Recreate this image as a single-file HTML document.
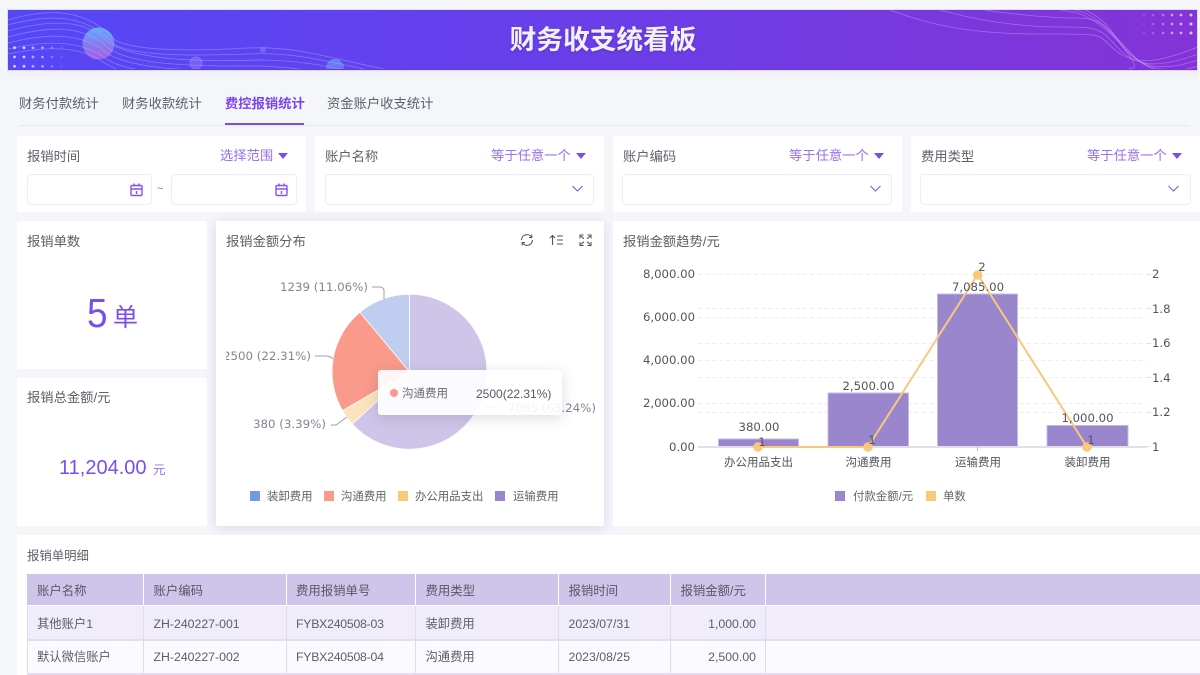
<!DOCTYPE html>
<html lang="zh-CN"><head><meta charset="utf-8"><title>财务收支统看板</title>
<style>
*{box-sizing:border-box}
html,body{margin:0;padding:0;width:1200px;height:675px;overflow:hidden;background:#f4f6fa}
#w{position:absolute;left:0;top:0;width:1200px;height:675px;overflow:hidden;filter:blur(.35px);font-family:"Liberation Sans","Noto Sans CJK SC",sans-serif;color:#50565e}
.a{position:absolute;white-space:nowrap}
.c{position:absolute;background:#fff}
.t{font-size:13.3px;line-height:18px;color:#5c626a}
.p{font-size:13.3px;line-height:18px;color:#9a70f0}
.i{position:absolute;background:#fff;border:1px solid #eceef2;border-radius:4px;height:31px}
.tri{position:absolute;width:0;height:0;border-left:5.5px solid transparent;border-right:5.5px solid transparent;border-top:6.5px solid #7a4df0}
.h{position:absolute;top:574px;height:31px;background:#cfc4ea;font-size:12.4px;line-height:34px;padding-left:10px;color:#555a64;white-space:nowrap}
.d{position:absolute;height:33px;font-size:12.3px;line-height:34px;padding-left:10px;color:#5a5f68;white-space:nowrap}
.r{text-align:right;padding:0 9px 0 0}
</style></head><body><div id="w">

<!-- banner -->
<div class="a" style="left:7px;top:9px;width:1191px;height:62px;background:linear-gradient(90deg,#5547f6 0%,#6a3ee8 50%,#8433d6 100%);border:1px solid #e0dcf3;overflow:hidden">
<svg width="1191" height="62" style="position:absolute;left:0;top:0" fill="none">
<defs><linearGradient id="o" x1="0" y1="0" x2="0" y2="1"><stop offset="0" stop-color="#5aaef5"/><stop offset=".55" stop-color="#8a78ee"/><stop offset="1" stop-color="#a45fe6"/></linearGradient>
<linearGradient id="o2" x1="0" y1="0" x2="0" y2="1"><stop offset="0" stop-color="#5aa0f0"/><stop offset="1" stop-color="#8a5cf0"/></linearGradient></defs>
<circle cx="90.500" cy="33.500" r="16" fill="url(#o)"/>
<circle cx="188" cy="53" r="6" fill="#a58cff" fill-opacity=".35" stroke="#b8a8ff" stroke-opacity=".35"/>
<circle cx="255" cy="40" r="3" fill="#a58cff" fill-opacity=".4"/>
<circle cx="327" cy="58" r="9" fill="url(#o2)" fill-opacity=".8"/>
<ellipse cx="327" cy="69" rx="20" ry="9" fill="#8b5cf0" fill-opacity=".8"/>
<g stroke="#a9b0ff" stroke-opacity=".5" stroke-width=".8">
<path d="M0 10C40 -2 78 -2 107 30C125 40 170 42 240 38C290 36 320 48 390 62"/>
<path d="M0 15C40 4 78 3 107 35C130 46 180 46 240 44C290 42 320 52 370 62"/>
<path d="M0 21C40 10 78 8 100 32C125 50 190 52 250 50C290 50 320 56 345 62"/>
<path d="M0 27C40 16 75 14 100 38C125 56 190 56 250 56C280 57 300 60 310 62"/>
<path d="M0 33C40 23 75 22 100 44C125 58 170 60 230 62"/>
<path d="M0 39C40 30 75 30 100 50C110 56 125 60 150 62"/>
<path d="M0 44C40 36 72 36 95 52C105 58 110 60 118 62"/>
</g>
<g fill="#fff">
<g fill-opacity=".75"><circle cx="6.500" cy="37.700" r="1.400"/><circle cx="6.500" cy="47" r="1.400"/><circle cx="6.500" cy="56.300" r="1.400"/><circle cx="16" cy="37.700" r="1.400"/><circle cx="16" cy="47" r="1.400"/><circle cx="16" cy="56.300" r="1.400"/></g>
<g fill-opacity=".55"><circle cx="25" cy="37.700" r="1.400"/><circle cx="25" cy="47" r="1.400"/><circle cx="25" cy="56.300" r="1.400"/><circle cx="34.500" cy="37.700" r="1.300"/><circle cx="34.500" cy="47" r="1.300"/><circle cx="34.500" cy="56.300" r="1.300"/></g>
<g fill-opacity=".28"><circle cx="44" cy="37.700" r="1.300"/><circle cx="44" cy="47" r="1.300"/><circle cx="44" cy="56.300" r="1.300"/></g>
<g fill-opacity=".12"><circle cx="53.500" cy="37.700" r="1.200"/><circle cx="53.500" cy="47" r="1.200"/><circle cx="53.500" cy="56.300" r="1.200"/></g>
<g fill-opacity=".12"><circle cx="1136" cy="5" r="1.300"/><circle cx="1136" cy="14" r="1.300"/><circle cx="1136" cy="23" r="1.300"/></g>
<g fill-opacity=".22"><circle cx="1145" cy="5" r="1.300"/><circle cx="1145" cy="14" r="1.300"/><circle cx="1145" cy="23" r="1.300"/></g>
<g fill-opacity=".38"><circle cx="1155" cy="5" r="1.300"/><circle cx="1155" cy="14" r="1.300"/><circle cx="1155" cy="23" r="1.300"/></g>
<g fill-opacity=".5"><circle cx="1164" cy="5" r="1.400"/><circle cx="1164" cy="14" r="1.400"/><circle cx="1164" cy="23" r="1.400"/></g>
<g fill-opacity=".6"><circle cx="1173" cy="5" r="1.400"/><circle cx="1173" cy="14" r="1.400"/><circle cx="1173" cy="23" r="1.400"/></g>
<g fill-opacity=".7"><circle cx="1183" cy="5" r="1.500"/><circle cx="1183" cy="14" r="1.500"/><circle cx="1183" cy="23" r="1.500"/></g>
</g>
<g transform="translate(-8 -10)" stroke="#d8b4ff" stroke-opacity=".42" stroke-width=".8">
<path d="M890 10C930 25 970 34 1040 34S1095 33 1115 50 1160 62 1198 47"/>
<path d="M940 10C975 20 1020 27 1060 27S1100 28 1118 48 1160 68 1198 54"/>
<path d="M985 10C1010 14 1050 18 1075 18S1105 25 1122 46 1160 73 1198 60"/>
<path d="M1060 10C1085 12 1100 22 1125 48S1165 76 1198 66"/>
<path d="M1075 10C1095 14 1110 30 1128 50S1150 66 1170 71"/>
<path d="M1085 10C1105 18 1112 32 1128 54S1125 64 1130 71"/>
</g>
</svg>
<div style="position:absolute;left:0;bottom:0;width:100%;height:1px;background:linear-gradient(90deg,#5a3cf8,#7a2ee6)"></div>
</div>
<div class="a" style="left:403px;top:21px;width:400px;text-align:center;font-size:26.700px;line-height:38px;font-weight:bold;color:#f3f0fd;text-shadow:0 1px 2px rgba(60,30,120,.35)">财务收支统看板</div>
<div class="a" style="left:7px;top:71px;width:1191px;height:10px;background:linear-gradient(#eef0f5,#f4f6fa)"></div>

<!-- tabs -->
<div class="a" style="left:19px;top:95px;font-size:13.300px;line-height:18px;color:#5a5f68">财务付款统计</div>
<div class="a" style="left:122px;top:95px;font-size:13.300px;line-height:18px;color:#5a5f68">财务收款统计</div>
<div class="a" style="left:225px;top:95px;font-size:13.300px;line-height:18px;color:#7a45ee;font-weight:bold">费控报销统计</div>
<div class="a" style="left:327px;top:95px;font-size:13.300px;line-height:18px;color:#5a5f68">资金账户收支统计</div>
<div class="a" style="left:19px;top:125px;width:1171px;height:1px;background:#e6e8ec"></div>
<div class="a" style="left:225px;top:123px;width:79px;height:2px;background:#7a4df0"></div>

<!-- filters -->
<div class="c" style="left:17px;top:136px;width:289px;height:76px"></div>
<div class="c" style="left:315px;top:136px;width:289px;height:76px"></div>
<div class="c" style="left:613px;top:136px;width:289px;height:76px"></div>
<div class="c" style="left:911px;top:136px;width:289px;height:76px"></div>

<div class="a t" style="left:27px;top:148px">报销时间</div>
<div class="a p" style="left:220px;top:147px">选择范围</div><div class="tri" style="left:278px;top:153px"></div>
<div class="i" style="left:27px;top:174px;width:125px"></div>
<div class="a" style="left:157px;top:182px;font-size:11px;line-height:14px;color:#777">~</div>
<div class="i" style="left:171px;top:174px;width:126px"></div>
<svg class="a" style="left:130px;top:183px" width="14" height="14" fill="none" stroke="#8a50f2" stroke-width="1.400"><rect x="1" y="2.500" width="11" height="10" rx="1"/><path d="M1 6H12M4 .5V3.500M9 .5V3.500M6.500 8V11"/></svg>
<svg class="a" style="left:275px;top:183px" width="14" height="14" fill="none" stroke="#8a50f2" stroke-width="1.400"><rect x="1" y="2.500" width="11" height="10" rx="1"/><path d="M1 6H12M4 .5V3.500M9 .5V3.500M6.500 8V11"/></svg>

<div class="a t" style="left:325px;top:148px">账户名称</div>
<div class="a p" style="left:491px;top:147px">等于任意一个</div><div class="tri" style="left:576px;top:153px"></div>
<div class="i" style="left:325px;top:174px;width:269px"></div>
<svg class="a" style="left:571px;top:184px" width="13" height="10" fill="none" stroke="#7f55ee" stroke-width="1.100"><path d="M1.500 2L6.500 7 11.500 2"/></svg>

<div class="a t" style="left:623px;top:148px">账户编码</div>
<div class="a p" style="left:789px;top:147px">等于任意一个</div><div class="tri" style="left:874px;top:153px"></div>
<div class="i" style="left:622px;top:174px;width:270px"></div>
<svg class="a" style="left:869px;top:184px" width="13" height="10" fill="none" stroke="#7f55ee" stroke-width="1.100"><path d="M1.500 2L6.500 7 11.500 2"/></svg>

<div class="a t" style="left:921px;top:148px">费用类型</div>
<div class="a p" style="left:1087px;top:147px">等于任意一个</div><div class="tri" style="left:1172px;top:153px"></div>
<div class="i" style="left:920px;top:174px;width:271px"></div>
<svg class="a" style="left:1167px;top:184px" width="13" height="10" fill="none" stroke="#7f55ee" stroke-width="1.100"><path d="M1.500 2L6.500 7 11.500 2"/></svg>

<!-- stat cards -->
<div class="c" style="left:17px;top:221px;width:190px;height:148px"></div>
<div class="a t" style="left:27px;top:233px">报销单数</div>
<div class="a" style="left:87px;top:289px;font-size:41px;line-height:48px;color:#7a4df0;transform:scaleX(.9);transform-origin:0 0">5</div>
<div class="a" style="left:113px;top:303px;font-size:25px;line-height:30px;color:#7a4df0">单</div>

<div class="c" style="left:17px;top:378px;width:190px;height:148px"></div>
<div class="a t" style="left:27px;top:389px">报销总金额/元</div>
<div class="a" style="left:59px;top:456px;font-size:20px;line-height:24px;color:#7a4df0">11,204.00</div>
<div class="a" style="left:153px;top:462px;font-size:12.500px;line-height:16px;color:#9a70f0">元</div>

<!-- pie card -->
<div class="c" style="left:216px;top:221px;width:388px;height:305px;box-shadow:0 2px 12px rgba(120,120,170,.22)"></div>
<div class="a t" style="left:226px;top:233px">报销金额分布</div>
<svg class="a" style="left:519px;top:232px" width="80" height="16" fill="none" stroke="#4e545c" stroke-width="1.100">
<path d="M2.500 8A5.500 5.500 0 0 1 12.500 5M13.500 8A5.500 5.500 0 0 1 3.500 11"/><path d="M12.800 2.500V5.500H10M3.200 13.500V10.500H6" stroke-width="1"/>
<path d="M33.500 13V3.500M31 6L33.500 3.500 36 6M38 4H44M38 8H44M38 12H44"/>
<path d="M61 6.500V3H64.500M68.500 3H72V6.500M72 10V13.500H68.500M64.500 13.500H61V10M62 4L64.800 6.800M71 4L68.200 6.800M71 12.500L68.200 9.700M62 12.500L64.800 9.700"/>
</svg>
<svg class="a" style="left:226px;top:221px;overflow:hidden" width="369" height="290">
<g transform="translate(-226 -221)">
<g stroke="#fff" stroke-width=".8">
<path d="M409.500 371.700V294.200A77.500 77.500 0 1 1 352.200 423.900Z" fill="#cfc5e8"/>
<path d="M409.500 371.700L352.200 423.900A77.500 77.500 0 0 1 342.500 410.600Z" fill="#fbe4bd"/>
<path d="M409.500 371.700L342.500 410.600A77.500 77.500 0 0 1 359.900 312.200Z" fill="#f99a8b"/>
<path d="M409.500 371.700L359.900 312.200A77.500 77.500 0 0 1 409.500 294.200Z" fill="#bfcdf1"/>
</g>
<g fill="none" stroke="#9aa0a8" stroke-width="1">
<path d="M372 287H380Q383 287 384 290L384 299"/>
<path d="M315 356H325Q331 356 333 359"/>
<path d="M331 425H336L347 417"/>
<path d="M480 402L487 407H499"/>
</g>
<g font-family="'DejaVu Sans',sans-serif" font-size="11.800" fill="#7f8792">
<text x="280" y="291">1239 (11.06%)</text>
<text x="223" y="360">2500 (22.31%)</text>
<text x="253" y="428">380 (3.39%)</text>
<text x="508" y="412">7085 (63.24%)</text>
</g>
</g></svg>
<div class="a" style="left:378px;top:370px;width:184px;height:45px;background:rgba(255,255,255,.9);border-radius:3px;box-shadow:0 3px 14px rgba(90,90,130,.22)"></div>
<div class="a" style="left:390px;top:389px;width:8px;height:8px;border-radius:50%;background:#f99a8b"></div>
<div class="a" style="left:402px;top:386px;font-size:11.500px;line-height:16px;color:#666c75">沟通费用</div>
<div class="a" style="left:476px;top:386px;font-size:12px;line-height:16px;color:#555b64">2500(22.31%)</div>

<div class="a" style="left:250px;top:491px;width:10px;height:10px;background:#769ae2"></div>
<div class="a" style="left:267px;top:489px;font-size:11.400px;line-height:16px;color:#5f656e">装卸费用</div>
<div class="a" style="left:324px;top:491px;width:10px;height:10px;background:#f99a8b"></div>
<div class="a" style="left:341px;top:489px;font-size:11.400px;line-height:16px;color:#5f656e">沟通费用</div>
<div class="a" style="left:398px;top:491px;width:10px;height:10px;background:#f9c87a"></div>
<div class="a" style="left:415px;top:489px;font-size:11.400px;line-height:16px;color:#5f656e">办公用品支出</div>
<div class="a" style="left:495px;top:491px;width:10px;height:10px;background:#9a86cc"></div>
<div class="a" style="left:513px;top:489px;font-size:11.400px;line-height:16px;color:#5f656e">运输费用</div>

<!-- trend card -->
<div class="c" style="left:613px;top:221px;width:587px;height:305px"></div>
<div class="a t" style="left:623px;top:233px">报销金额趋势/元</div>
<svg class="a" style="left:613px;top:221px;overflow:visible" width="587" height="305">
<g transform="translate(-613 -221)">
<g stroke="#eceef1" stroke-width="1" stroke-dasharray="4 3">
<path d="M698 274.500H1147M698 308.500H1147M698 317.500H1147M698 343.500H1147M698 360.500H1147M698 377.500H1147M698 403.500H1147M698 412.500H1147"/>
</g>
<path d="M1147 274.500H1151M1147 308.500H1151M1147 343.500H1151M1147 377.500H1151M1147 412.500H1151M1147 446.500H1151" stroke="#e0e2e6"/>
<g fill="#9a86cc" stroke="#c5b9e8" stroke-width="1">
<rect x="718.500" y="439" width="80" height="8"/>
<rect x="828" y="393" width="80.500" height="54"/>
<rect x="937.500" y="294" width="80" height="153"/>
<rect x="1047" y="425.500" width="81" height="21.500"/>
</g>
<path d="M698 447H1147" stroke="#dfe1e6" stroke-width="2"/>
<path d="M977.500 447V451" stroke="#bbb"/>
<path d="M758 447L868 447 977.700 274.500 1087 447" fill="none" stroke="#f9c87a" stroke-width="2"/>
<g fill="#f9c87a"><circle cx="758" cy="447" r="4.800"/><circle cx="868" cy="447" r="4.800"/><circle cx="977.700" cy="275" r="4.800"/><circle cx="1087" cy="447" r="4.800"/></g>
<g font-family="'DejaVu Sans',sans-serif" font-size="11.700" fill="#50565e">
<g text-anchor="end"><text x="695" y="278">8,000.00</text><text x="695" y="321">6,000.00</text><text x="695" y="364">4,000.00</text><text x="695" y="407">2,000.00</text><text x="695" y="451">0.00</text></g>
<g><text x="1152" y="278">2</text><text x="1152" y="313">1.8</text><text x="1152" y="347">1.6</text><text x="1152" y="382">1.4</text><text x="1152" y="416">1.2</text><text x="1152" y="451">1</text></g>
<g text-anchor="middle"><text x="759" y="431">380.00</text><text x="868.500" y="390">2,500.00</text><text x="978" y="291">7,085.00</text><text x="1087.500" y="422">1,000.00</text>
<text x="762" y="446">1</text><text x="872" y="444">1</text><text x="982" y="271">2</text><text x="1091" y="444">1</text></g>
</g>
<g font-family="'Liberation Sans','Noto Sans CJK SC',sans-serif" font-size="11.500" fill="#50565e" text-anchor="middle">
<text x="758.500" y="466">办公用品支出</text><text x="868.500" y="466">沟通费用</text><text x="978" y="466">运输费用</text><text x="1087.500" y="466">装卸费用</text>
</g>
</g></svg>
<div class="a" style="left:835px;top:491px;width:10px;height:10px;background:#9a86cc"></div>
<div class="a" style="left:853px;top:489px;font-size:11.400px;line-height:16px;color:#5f656e">付款金额/元</div>
<div class="a" style="left:926px;top:491px;width:10px;height:10px;background:#f9c87a"></div>
<div class="a" style="left:943px;top:489px;font-size:11.400px;line-height:16px;color:#5f656e">单数</div>

<!-- table -->
<div class="c" style="left:17px;top:535px;width:1183px;height:140px"></div>
<div class="a" style="left:27px;top:547px;font-size:12.400px;line-height:18px;color:#5c626a">报销单明细</div>

<div class="h" style="left:27px;width:116px">账户名称</div>
<div class="h" style="left:144px;width:142px;padding-left:9.500px">账户编码</div>
<div class="h" style="left:287px;width:128px;padding-left:9px">费用报销单号</div>
<div class="h" style="left:416px;width:142px;padding-left:9.500px">费用类型</div>
<div class="h" style="left:559px;width:111px;padding-left:9.500px">报销时间</div>
<div class="h" style="left:671px;width:94px;padding-left:9.500px">报销金额/元</div>
<div class="h" style="left:766px;width:434px"></div>

<div class="a" style="left:27px;top:606px;width:1173px;height:33px;background:#f0ecf9"></div>
<div class="a" style="left:27px;top:640px;width:1173px;height:33px;background:#fbfaff"></div>
<div class="a" style="left:27px;top:639px;width:1173px;height:1.500px;background:#e2dcf4"></div>
<div class="a" style="left:27px;top:672.500px;width:1173px;height:2.500px;background:#e2dcf4"></div>
<div class="a" style="left:143px;top:606px;width:1px;height:69px;background:#e0d9f3"></div>
<div class="a" style="left:286px;top:606px;width:1px;height:69px;background:#e0d9f3"></div>
<div class="a" style="left:415px;top:606px;width:1px;height:69px;background:#e0d9f3"></div>
<div class="a" style="left:558px;top:606px;width:1px;height:69px;background:#e0d9f3"></div>
<div class="a" style="left:670px;top:606px;width:1px;height:69px;background:#e0d9f3"></div>
<div class="a" style="left:765px;top:606px;width:1px;height:69px;background:#e0d9f3"></div>
<div class="a" style="left:27px;top:606px;width:1px;height:69px;background:#e0d9f3"></div>

<div class="d" style="left:27px;top:607px;width:116px">其他账户1</div>
<div class="d" style="left:144px;top:607px;width:142px;padding-left:9.500px">ZH-240227-001</div>
<div class="d" style="left:287px;top:607px;width:128px;padding-left:9px;letter-spacing:-.25px">FYBX240508-03</div>
<div class="d" style="left:416px;top:607px;width:142px;padding-left:9.500px">装卸费用</div>
<div class="d" style="left:559px;top:607px;width:111px;padding-left:9.500px">2023/07/31</div>
<div class="d r" style="left:671px;top:607px;width:94px">1,000.00</div>

<div class="d" style="left:27px;top:640px;width:116px">默认微信账户</div>
<div class="d" style="left:144px;top:640px;width:142px;padding-left:9.500px">ZH-240227-002</div>
<div class="d" style="left:287px;top:640px;width:128px;padding-left:9px;letter-spacing:-.25px">FYBX240508-04</div>
<div class="d" style="left:416px;top:640px;width:142px;padding-left:9.500px">沟通费用</div>
<div class="d" style="left:559px;top:640px;width:111px;padding-left:9.500px">2023/08/25</div>
<div class="d r" style="left:671px;top:640px;width:94px">2,500.00</div>
</div></body></html>
